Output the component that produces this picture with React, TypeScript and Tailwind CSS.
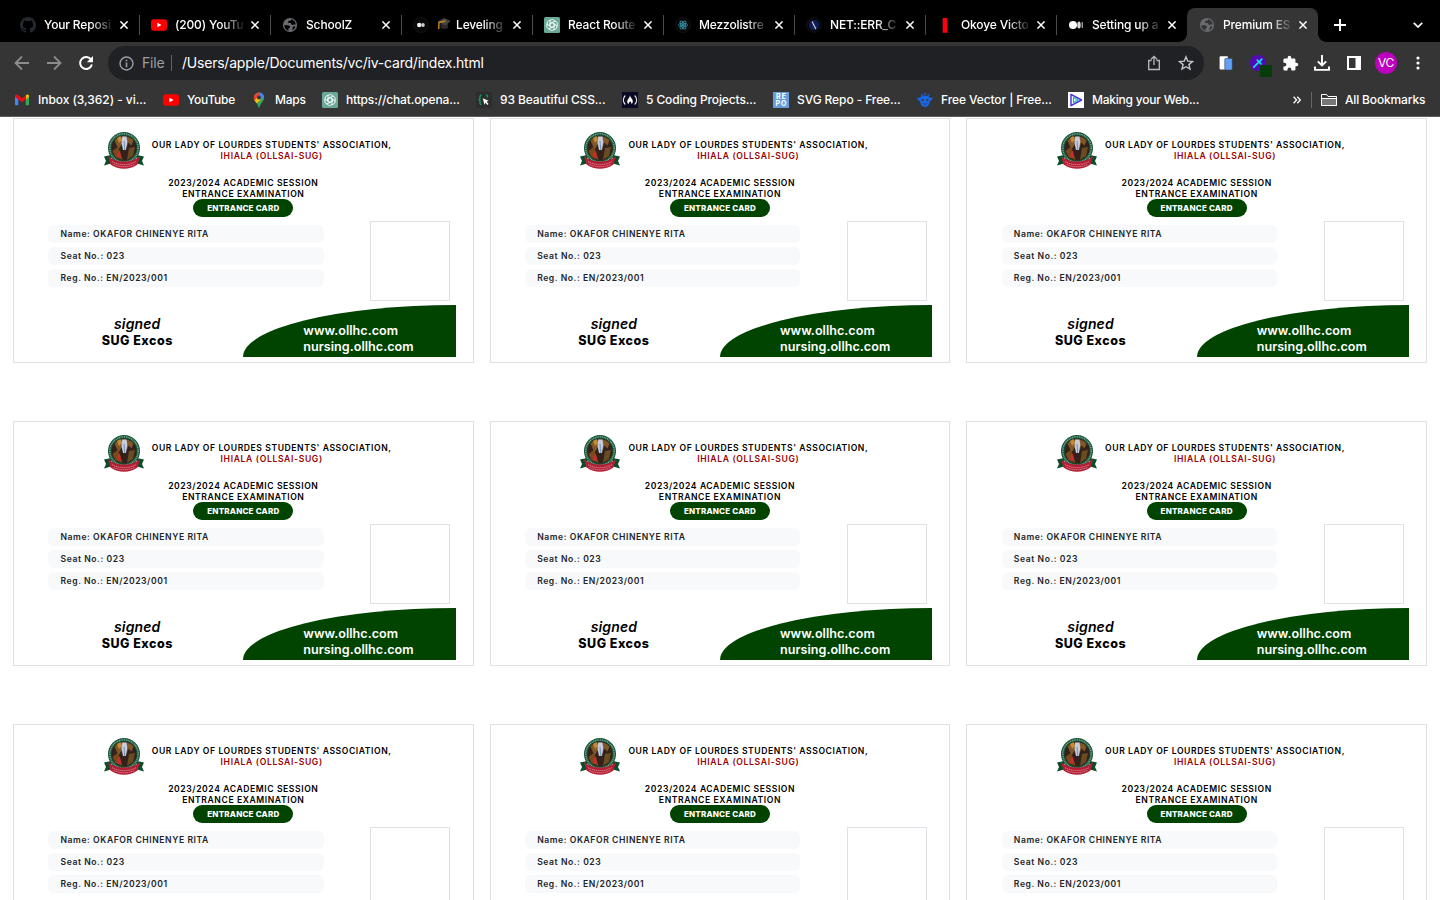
import React from "react";

type IconProps = { className?: string };

const OpenAI = () => (
  <svg viewBox="0 0 16 16" className="h-4 w-4 shrink-0">
    <rect width="16" height="16" rx="1.5" fill="#6aa997" />
    <g transform="translate(8 8)" fill="none" stroke="#fff" strokeWidth="0.85">
      {[0, 60, 120, 180, 240, 300].map((a) => (
        <path key={a} transform={`rotate(${a})`} d="M-2 -1.1V-3.6A2.3 2.3 0 0 1 1.6 -5.1L3.6 -3.8M-2 -1.3L0.2 -2.5L2.3 -1.3" />
      ))}
    </g>
  </svg>
);

const YouTube = () => (
  <svg viewBox="0 0 16 16" className="h-4 w-4 shrink-0">
    <rect x="0" y="2.3" width="16" height="11.4" rx="3" fill="#f00" />
    <path d="M6.4 5.7v4.6L10.5 8z" fill="#fff" />
  </svg>
);

const Github = () => (
  <svg viewBox="0 0 16 16" className="h-4 w-4 shrink-0">
    <path fill="#24292f" d="M8 0C3.58 0 0 3.58 0 8c0 3.54 2.29 6.53 5.47 7.59.4.07.55-.17.55-.38v-1.49c-2.01.37-2.53-.49-2.69-.94-.09-.23-.48-.94-.82-1.13-.28-.15-.68-.52-.01-.53.63-.01 1.08.58 1.23.82.72 1.21 1.87.87 2.33.66.07-.52.28-.87.51-1.07-1.78-.2-3.64-.89-3.64-3.95 0-.87.31-1.59.82-2.15-.08-.2-.36-1.02.08-2.12 0 0 .67-.21 2.2.82a7.5 7.5 0 0 1 4 0c1.53-1.04 2.2-.82 2.2-.82.44 1.1.16 1.92.08 2.12.51.56.82 1.27.82 2.15 0 3.07-1.87 3.75-3.65 3.95.29.25.54.73.54 1.48v2.2c0 .21.15.46.55.38A8 8 0 0 0 16 8c0-4.42-3.58-8-8-8" />
  </svg>
);

const Globe = ({ className = "text-black" }: IconProps) => (
  <svg viewBox="0 0 16 16" className={`h-4 w-4 shrink-0 ${className}`}>
    <circle cx="8" cy="8" r="7.1" fill="#686a70" />
    <path d="M2.2 8.2h3.4c1.5 0 2.4.8 2.4 2v.7H6.5v2.8C4 13 2.3 11 2.2 8.2zM9.3 2.3c2.500.6 4.200 2.600 4.500 5.100h-1.600c-.6 0-1 .6-1.500.6-1 0-1.500-.6-1.500-1.200 0-.5-.4-.8-1.200-.8H6.200V4.700c0-.6.4-.9 1-.9.9 0 2.100-.2 2.100-1.500zM11 9.500h2.500c-.5 1.800-1.600 3.100-3.200 3.800z" fill="currentColor" />
  </svg>
);

const MediumDim = () => (
  <svg viewBox="0 0 16 16" className="h-4 w-4 shrink-0">
    <circle cx="8" cy="8" r="7.5" fill="#080808" stroke="#1b1b1b" strokeWidth=".6" />
    <circle cx="6.2" cy="8" r="2.2" fill="#eee" />
    <ellipse cx="10" cy="8" rx="1.8" ry="2.1" fill="#ccc" />
  </svg>
);

const Medium = () => (
  <svg viewBox="0 0 16 16" className="h-4 w-4 shrink-0">
    <circle cx="5" cy="8" r="4" fill="#fff" />
    <ellipse cx="11" cy="8" rx="1.7" ry="3.5" fill="#dcdcdc" />
    <rect x="13.6" y="5" width="1.3" height="6" rx=".6" fill="#aaa" />
  </svg>
);

const ReactIcon = () => (
  <svg viewBox="0 0 16 16" className="h-4 w-4 shrink-0">
    <circle cx="8" cy="8" r="7.5" fill="#080808" stroke="#1b1b1b" strokeWidth=".6" />
    <g fill="none" stroke="#32899e" strokeWidth=".9">
      <ellipse cx="8" cy="8" rx="4.6" ry="1.9" />
      <ellipse cx="8" cy="8" rx="4.6" ry="1.9" transform="rotate(60 8 8)" />
      <ellipse cx="8" cy="8" rx="4.6" ry="1.9" transform="rotate(120 8 8)" />
    </g>
    <circle cx="8" cy="8" r="1" fill="#43acc4" />
  </svg>
);

const BlueDisc = () => (
  <svg viewBox="0 0 16 16" className="h-4 w-4 shrink-0">
    <circle cx="8" cy="8" r="7.4" fill="#080808" stroke="#241717" strokeWidth=".6" />
    <circle cx="8" cy="8" r="5.2" fill="#101c54" />
    <path d="M6.1 4.5 9.8 12" stroke="#d5d8e4" strokeWidth="1.1" />
  </svg>
);

const RedBar = () => (
  <svg viewBox="0 0 16 16" className="h-4 w-4 shrink-0">
    <rect x="5.7" y="1" width="4.6" height="14.8" fill="#ff0012" />
  </svg>
);

const Cap = () => (
  <svg viewBox="0 0 14 14" className="mr-[5px] inline-block h-3.5 w-3.5 align-[-2px]">
    <path d="M3.5 6.5v4c2 2 6 2 7.5 0v-4z" fill="#2a2a2a" />
    <path d="M.5 4.5 7 1l6.8 2.9L8.3 8.5z" fill="#454545" />
    <path d="M8.5 4 2 5.5 1.7 12" fill="none" stroke="#c98a1b" strokeWidth="1.4" />
  </svg>
);

const Close = () => (
  <svg viewBox="0 0 8 8" className="h-2 w-2 shrink-0">
    <path d="M.4.4l7.2 7.2M7.6.4.4 7.6" stroke="#fff" strokeWidth="1.5" />
  </svg>
);

const Gmail = () => (
  <svg viewBox="0 0 16 16" className="h-4 w-4 shrink-0">
    <path d="M1 4v8.3c0 .6.4 1 1 1h2.3V7z" fill="#4285f4" />
    <path d="M15 4v8.3c0 .6-.4 1-1 1h-2.3V7z" fill="#34a853" />
    <path d="M11.7 3.7V7.5L15 5V4c0-1.4-1.5-2-2.5-1.2z" fill="#fbbc04" />
    <path d="M1 4c0-1.4 1.5-2 2.5-1.2L8 6.2l4-3v3.9L8 10.2 4.3 7.4 1 5z" fill="#ea0f16" />
  </svg>
);

const MapsPin = () => (
  <svg viewBox="0 0 16 16" className="h-4 w-4 shrink-0">
    <defs>
      <clipPath id="pin">
        <path d="M8 .4a5.200 5.200 0 0 1 5.200 5.200c0 2-1 3.200-2.300 4.800C9.800 11.800 8.900 13.300 8.600 15c-.2.900-1 .9-1.200 0-.3-1.700-1.200-3.200-2.300-4.600C3.800 8.800 2.800 7.600 2.800 5.600A5.200 5.200 0 0 1 8 .4" />
      </clipPath>
    </defs>
    <g clipPath="url(#pin)">
      <rect width="16" height="16" fill="#34a853" />
      <path d="M7 0h9v3L9.500 8 6 5z" fill="#4285f4" />
      <path d="M0 9 6 4.500 9.800 7.800 3.500 13z" fill="#fbbc04" />
      <path d="M0 0h8l1 2.500-5.500 6H0z" fill="#ea4335" />
    </g>
    <circle cx="8" cy="5.5" r="1.9" fill="#353535" />
  </svg>
);

const CssBraces = () => (
  <svg viewBox="0 0 16 16" className="h-4 w-4 shrink-0">
    <rect width="16" height="16" fill="#2d2d2d" />
    <path d="M5.5 3C3.8 3 4 4.5 4 6c0 1-.4 1.5-1.5 1.5C3.6 7.5 4 8.3 4 9.5c0 1.500-.2 3 1.500 3M10 3c1.500 0 1.400 1 1.400 2.500" fill="none" stroke="#14935c" strokeWidth="1.5" />
    <path d="m6.800 6.200 5.800 2.500-2 1 2 2.200-1.100 1.100-2-2.200-1.100 2z" fill="#fff" />
  </svg>
);

const FreeCode = () => (
  <svg viewBox="0 0 16 16" className="h-4 w-4 shrink-0">
    <rect width="16" height="16" fill="#0a0a23" />
    <path d="M3.3 3.5C.7 6 .7 10 3.3 12.5M12.700 3.500c2.600 2.500 2.600 6.500 0 9" fill="none" stroke="#e8e8f0" strokeWidth="1.1" />
    <path d="M8 3.500c.3 2 2.800 3.300 2.800 5.800 0 1.300-.6 2.200-1.400 2.900.2-1.400-.2-2-1.300-3-.5 1.200-1.900 1.400-1.300 3C5.600 11.600 5.200 10.500 5.200 9.500 5.200 7.500 7.500 6.300 8 3.500" fill="#fff" />
  </svg>
);

const SvgRepo = () => (
  <span className="flex h-4 w-4 shrink-0 flex-col items-center justify-center bg-[#6a9edb] text-[7px] leading-[7px] font-bold tracking-[1px] text-white">
    <span className="pl-px">RE</span>
    <span className="pl-px">PO</span>
  </span>
);

const FreeVector = () => (
  <svg viewBox="0 0 16 16" className="h-4 w-4 shrink-0">
    <path d="M8 3.600c2.800 0 4.600.9 5 2.500.8-.5 1.900-.8 2.500-.4 0 1.800-1 3-2.500 3.200-.5 3.300-2 5.900-5 5.900s-4.500-2.600-5-5.900C1.500 8.700.5 7.500.5 5.700c.6-.4 1.700-.1 2.500.4.400-1.600 2.200-2.500 5-2.500" fill="#1669e8" />
    <path d="M4 3.200 6 2.600M8 2.800V.8M12.300 3.500l-1.800-1" stroke="#1669e8" strokeWidth="1.2" />
    <circle cx="5.7" cy="8" r="1.3" fill="#353f55" />
    <circle cx="10.3" cy="8" r="1.3" fill="#353f55" />
    <path d="M5.700 11.300c1.400 1.100 3.200 1.100 4.600 0" fill="none" stroke="#2e3f66" strokeWidth="1" />
  </svg>
);

const PlayMark = () => (
  <svg viewBox="0 0 16 16" className="h-4 w-4 shrink-0">
    <rect width="16" height="16" fill="#fff" />
    <path d="M3 2.300v11.400L13.500 8z" fill="none" stroke="#4a2ff0" strokeWidth="1.5" strokeLinejoin="round" />
    <path d="M5.500 5.500v5L10 8z" fill="none" stroke="#23b8a6" strokeWidth="1.2" />
  </svg>
);

const tabs: { icon: React.ReactNode; title: React.ReactNode; active?: boolean }[] = [
  { icon: <Github />, title: "Your Reposi" },
  { icon: <YouTube />, title: "(200) YouTu" },
  { icon: <Globe />, title: "SchoolZ" },
  { icon: <MediumDim />, title: <><Cap />Leveling</> },
  { icon: <OpenAI />, title: "React Route" },
  { icon: <ReactIcon />, title: "Mezzolistre" },
  { icon: <BlueDisc />, title: "NET::ERR_C" },
  { icon: <RedBar />, title: "Okoye Victo" },
  { icon: <Medium />, title: "Setting up a" },
  { icon: <Globe className="text-[#353535]" />, title: "Premium ES", active: true },
];

const bookmarks = [
  { icon: <Gmail />, label: "Inbox (3,362) - vi...", width: "w-[149px]", track: "tracking-[-0.05px]" },
  { icon: <YouTube />, label: "YouTube", width: "w-[88px]", track: "tracking-[-0.25px]" },
  { icon: <MapsPin />, label: "Maps", width: "w-[71px]", track: "tracking-[-0.2px]" },
  { icon: <OpenAI />, label: "https://chat.opena...", width: "w-[154px]", track: "tracking-[-0.15px]" },
  { icon: <CssBraces />, label: "93 Beautiful CSS...", width: "w-[146px]", track: "tracking-[-0.12px]" },
  { icon: <FreeCode />, label: "5 Coding Projects...", width: "w-[151px]", track: "tracking-[-0.12px]" },
  { icon: <SvgRepo />, label: "SVG Repo - Free...", width: "w-[144px]", track: "tracking-[-0.1px]" },
  { icon: <FreeVector />, label: "Free Vector | Free...", width: "w-[151px]", track: "tracking-[-0.1px]" },
  { icon: <PlayMark />, label: "Making your Web...", width: "w-[131px]", track: "tracking-[-0.22px]" },
];

function TabStrip() {
  return (
    <div className="flex h-[42px] shrink-0 items-end bg-black pl-2">
      {tabs.map((t, i) => (
        <div
          key={i}
          className={`relative flex h-[34px] w-[131px] shrink-0 items-center pl-3 ${t.active ? "rounded-t-[8px] bg-[#353535]" : ""}`}
        >
          {t.icon}
          <div className="ml-2 w-[68px] text-[12px] leading-[18px] font-medium tracking-[-0.15px] whitespace-nowrap text-white [mask-image:linear-gradient(to_right,#000_68%,transparent_104%)]">
            {t.title}
          </div>
          <div className="ml-2">
            <Close />
          </div>
          {i < 8 && <div className="absolute top-[7px] right-[-1px] h-5 w-px bg-[#4d4d4d]" />}
          {t.active && (
            <>
              <div className="absolute bottom-0 -left-2 h-2 w-2 bg-[radial-gradient(circle_at_0_0,transparent_7.5px,#353535_8px)]" />
              <div className="absolute -right-2 bottom-0 h-2 w-2 bg-[radial-gradient(circle_at_100%_0,transparent_7.5px,#353535_8px)]" />
            </>
          )}
        </div>
      ))}
      <svg viewBox="0 0 12 12" className="mb-[11px] ml-4 h-3 w-3">
        <path d="M6 0v12M0 6h12" stroke="#fff" strokeWidth="1.9" />
      </svg>
      <svg viewBox="0 0 10 6" className="mr-[17px] mb-[14px] ml-auto h-1.5 w-2.5">
        <path d="M.8.8 5 5 9.2.8" fill="none" stroke="#fff" strokeWidth="1.7" />
      </svg>
    </div>
  );
}

function Toolbar() {
  return (
    <div className="flex h-[42px] shrink-0 items-center bg-[#353535] pl-[14px]">
      <svg viewBox="0 0 16 16" className="h-4 w-4" fill="none" stroke="#8c8c8c" strokeWidth="1.8">
        <path d="M15 8H2M8 1.500 1.500 8 8 14.500" />
      </svg>
      <svg viewBox="0 0 16 16" className="ml-4 h-4 w-4" fill="none" stroke="#8c8c8c" strokeWidth="1.8">
        <path d="M1 8h13M8 1.500 14.500 8 8 14.500" />
      </svg>
      <svg viewBox="0 0 16 16" className="ml-4 h-4 w-4">
        <path d="M13.200 4.800A6 6 0 1 0 13.900 9.600" fill="none" stroke="#fff" strokeWidth="2" />
        <path d="M15 1v6.200H8.800z" fill="#fff" />
      </svg>
      <div className="ml-[14px] flex h-[34px] w-[1096px] items-center rounded-full bg-[#202124] pl-[11px] text-[14px]">
        <svg viewBox="0 0 16 16" className="h-[15px] w-[15px]" fill="none" stroke="#9aa0a6" strokeWidth="1.5">
          <circle cx="8" cy="8" r="6.9" />
          <path d="M8 7v5M8 4v1.700" strokeWidth="1.7" />
        </svg>
        <span className="mb-0.5 ml-2 w-[29px] tracking-[-0.2px] text-[#9aa0a6]">File</span>
        <span className="h-4 w-px bg-[#5f6368]" />
        <span className="mb-0.5 ml-[10px] text-[14px] tracking-[-0.22px] whitespace-nowrap text-white">
          /Users/apple/Documents/vc/iv-card/index.html
        </span>
        <svg viewBox="0 0 16 16" className="mr-4 ml-auto h-4 w-4" fill="none" stroke="#b7babe" strokeWidth="1.3">
          <path d="M5.500 5.500H2.700v9h10.600v-9h-2.800M8 10V1.500M5 4.300 8 1.300l3 3" />
        </svg>
        <svg viewBox="0 0 16 16" className="mr-[10px] h-4 w-4" fill="none" stroke="#c4c7ca" strokeWidth="1.4">
          <path d="m8 1.900 1.800 4.300 4.600.4-3.500 3 1.100 4.500L8 11.700l-4 2.400 1.100-4.500-3.500-3 4.600-.4z" />
        </svg>
      </div>
      <svg viewBox="0 0 16 16" className="ml-[14px] h-4 w-4">
        <rect x="1.6" y="1.2" width="8.4" height="13.3" rx="1" fill="#fff" />
        <rect x="6.8" y="3.3" width="7.5" height="11.8" rx="1.3" fill="#60a1f8" stroke="#2e3a4d" strokeWidth=".6" />
      </svg>
      <div className="relative ml-4 h-4 w-4">
        <svg viewBox="0 0 16 16" className="h-4 w-4">
          <circle cx="8" cy="8" r="8" fill="#5409b8" />
          <path d="m3.800 12.200 6-6" fill="none" stroke="#16d8e4" strokeWidth="1.9" strokeLinecap="round" />
          <path d="m7.300 5.200 3.700 3.700M9.700 6.300l2.100-2.100" fill="none" stroke="#16d8e4" strokeWidth="1.8" strokeLinecap="round" />
        </svg>
        <div className="absolute top-[10px] left-[10px] h-3 w-3 bg-[#063b0a]" />
      </div>
      <svg viewBox="0 0 24 24" className="ml-4 h-[17px] w-[17px]">
        <path fill="#fff" d="M20.500 11H19V7a2 2 0 0 0-2-2h-4V3.500a2.500 2.500 0 0 0-5 0V5H4a2 2 0 0 0-2 2v3.800h1.500a2.700 2.700 0 0 1 0 5.400H2V20a2 2 0 0 0 2 2h3.800v-1.500a2.700 2.700 0 0 1 5.400 0V22H17a2 2 0 0 0 2-2v-4h1.500a2.500 2.500 0 0 0 0-5" />
      </svg>
      <svg viewBox="0 0 16 16" className="ml-[15px] h-4 w-4" fill="none" stroke="#fff" strokeWidth="1.9">
        <path d="M8 0v10M3.800 6.300 8 10.500l4.200-4.200M1 11.500v3.400h14v-3.400" />
      </svg>
      <svg viewBox="0 0 16 16" className="ml-4 h-4 w-4">
        <path d="M1 1h14v14H1zM3 3v10h6.500V3z" fill="#fff" fillRule="evenodd" />
      </svg>
      <div className="ml-[13px] flex h-[22px] w-[22px] items-center justify-center rounded-full bg-[#bd00bd] text-[12px] tracking-[-0.4px] text-white">VC</div>
      <svg viewBox="0 0 4 14" className="ml-[19px] h-3.5 w-1" fill="#fff">
        <circle cx="2" cy="2" r="1.6" />
        <circle cx="2" cy="7" r="1.6" />
        <circle cx="2" cy="12" r="1.6" />
      </svg>
    </div>
  );
}

function BookmarksBar() {
  return (
    <div className="flex h-[33px] shrink-0 items-center border-b border-[#5c5c5c] bg-[#353535] pl-[14px] text-[12px] font-medium whitespace-nowrap text-white">
      {bookmarks.map((b) => (
        <div key={b.label} className={`flex shrink-0 items-center gap-2 ${b.width}`}>
          {b.icon}
          <span className={b.track}>{b.label}</span>
        </div>
      ))}
      <svg viewBox="0 0 8 8" className="mr-[10px] ml-auto h-2 w-2" fill="none" stroke="#fff" strokeWidth="1.3">
        <path d="m.6.8 3 3.200-3 3.200M4.300.8l3 3.200-3 3.200" />
      </svg>
      <div className="h-4 w-px bg-[#666]" />
      <svg viewBox="0 0 16 14" className="ml-[9px] h-3.5 w-4" fill="#777" stroke="#fff" strokeWidth="1">
        <path d="M.5 12.500v-11h5l1.500 2h8.500v9z" fill="#353535" />
        <path d="M.5 12.500V5.500h15v7z" />
      </svg>
      <span className="mr-[14px] ml-2 w-[81px] tracking-[-0.16px]">All Bookmarks</span>
    </div>
  );
}

function Crest() {
  return (
    <svg viewBox="0 0 40 40" className="h-10 w-10 shrink-0">
      <path d="M0 25.500 7 24v8.500l-7 2 2-4.500zM40 25.500 33 24v8.500l7 2-2-4.500z" fill="#0b4d2b" />
      <circle cx="20" cy="17" r="16" fill="#17573a" />
      <circle cx="20" cy="17" r="14.2" fill="none" stroke="#8fb09e" strokeWidth="1.3" strokeDasharray="1 .8" />
      <circle cx="20" cy="17" r="12.6" fill="#33221c" />
      <path d="M10.500 9.500c4-5 15-5.500 19 0l-2 5-3-3-2 5-3-6-5 8z" fill="#805828" />
      <path d="m13 7 3.500-2L18 9l-3 3z" fill="#c28c36" />
      <path d="m8.500 20 5-4 3 6 2 7-7-3z" fill="#7a4a1b" />
      <path d="m25 17 6-1-2 9-6 4z" fill="#6b4b20" />
      <path d="M18.200 5.500h4.300l.8 5-1.300 8.500h-3L17.500 12z" fill="#c9cadb" />
      <path d="m20 10 .7 9" stroke="#7799c0" strokeWidth="1.1" />
      <path d="m13.500 22 2.200-2.500L17 26l-3.500 1z" fill="#cc2a30" />
      <path d="M4 25c4 3.500 9 5.500 16 5.500S32 28.500 36 25l-2.500 8.500C29 36.700 25 37.700 20 37.700S11 36.700 6.500 33.500z" fill="#b51f35" />
      <path d="M8 30.700c8 4 16 4 24 0M9.500 33.500c7 3 14 3 21 0" fill="none" stroke="#d79aa2" strokeWidth=".8" strokeDasharray="1.3 .7" />
    </svg>
  );
}

const details = ["Name: OKAFOR CHINENYE RITA", "Seat No.: 023", "Reg. No.: EN/2023/001"];

function EntranceCard() {
  return (
    <article className="flex h-[245px] flex-col border border-[#dee2e6] bg-white text-black">
      <header className="flex h-[59px] pt-3 pl-[89.7px]">
        <Crest />
        <div className="mt-[9px] ml-[8px] w-[240px] text-center text-[8.6px] leading-[11px] font-semibold tracking-[0.57px] whitespace-nowrap">
          <div>OUR LADY OF LOURDES STUDENTS' ASSOCIATION,</div>
          <div className="tracking-[0.65px] text-[#990000]">IHIALA (OLLSAI-SUG)</div>
        </div>
      </header>
      <div className="flex flex-col items-center text-[8.6px] leading-[11px] font-semibold tracking-[0.58px]">
        <div>2023/2024 ACADEMIC SESSION</div>
        <div>ENTRANCE EXAMINATION</div>
        <div className="-mt-px flex h-[18px] w-[100px] items-center justify-center rounded-full bg-[#004400] text-[8px] font-extrabold tracking-[0.2px] text-white">
          ENTRANCE CARD
        </div>
      </div>
      <div className="mt-1 flex pl-[34.3px]">
        <div className="mt-1 flex w-[275.4px] flex-col gap-1">
          {details.map((d) => (
            <div key={d} className="flex h-[18px] items-center rounded-[6px] bg-[#f8f9fb] pl-[12.2px] text-[8.6px] font-semibold tracking-[0.57px] text-[#212529]">
              {d}
            </div>
          ))}
        </div>
        <div className="ml-[46.6px] h-20 w-20 border border-[#dee2e6]" />
      </div>
      <footer className="mt-1 flex justify-between pr-[17px]">
        <div className="w-[229px] pt-[11px] pl-[17.5px] text-center text-[12.5px] leading-4 font-extrabold">
          <div className="text-[14px] font-semibold tracking-[0.15px] italic">signed</div>
          <div className="pt-px tracking-[0.5px]">SUG Excos</div>
        </div>
        <div className="h-[52px] w-[212.3px] shrink-0 rounded-tl-[100%] bg-[#004400] pt-[18px] pl-[60px] text-[12.6px] leading-4 font-semibold tracking-[0.02px] text-white">
          <div>www.ollhc.com</div>
          <div>nursing.ollhc.com</div>
        </div>
      </footer>
    </article>
  );
}

export default function App() {
  return (
    <div className="flex h-[900px] w-[1440px] flex-col overflow-hidden bg-white font-['Inter','Liberation_Sans',sans-serif]">
      <TabStrip />
      <Toolbar />
      <BookmarksBar />
      <main className="grid grid-cols-3 gap-x-4 gap-y-[58px] px-[13px] pt-px">
        {Array.from({ length: 9 }, (_, i) => (
          <EntranceCard key={i} />
        ))}
      </main>
    </div>
  );
}
